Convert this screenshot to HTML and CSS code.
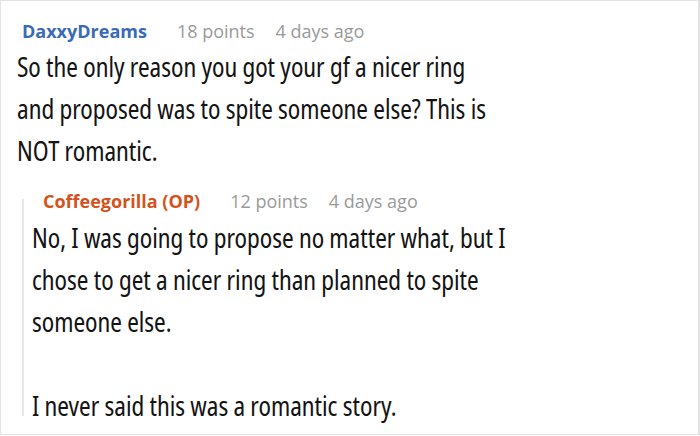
FILE: index.html
```html
<!DOCTYPE html>
<html lang="en">
<head>
<meta charset="utf-8">
<link rel="stylesheet" href="styles.css">
</head>
<body>
<div class="frame">
  <div class="comment">
    <div class="meta">
      <span class="author author-blue">DaxxyDreams</span>
      <span class="points">18 points</span>
      <span class="date">4 days ago</span>
    </div>
    <div class="body top-body">
      <p>So the only reason you got your gf a nicer ring and proposed was to spite someone else? This is NOT romantic.</p>
    </div>
    <div class="reply">
      <div class="reply-bar"></div>
      <div class="reply-content">
        <div class="meta">
          <span class="author author-orange">Coffeegorilla (OP)</span>
          <span class="points">12 points</span>
          <span class="date">4 days ago</span>
        </div>
        <div class="body reply-body">
          <p>No, I was going to propose no matter what, but I chose to get a nicer ring than planned to spite someone else.</p>
          <p class="gap">I never said this was a romantic story.</p>
        </div>
      </div>
    </div>
  </div>
</div>
</body>
</html>
```
FILE: styles.css
```css
html, body {
  margin: 0;
  padding: 0;
  background: #fff;
}
.frame {
  box-sizing: border-box;
  width: 700px;
  height: 435px;
  border: 1px solid #e2e2e2;
  border-right-width: 2px;
  overflow: hidden;
}
.comment {
  padding-top: 18px;
}
.meta {
  display: flex;
  align-items: baseline;
  font-family: "Open Sans", "Noto Sans", sans-serif;
  font-size: 18px;
  line-height: 24px;
  padding-left: 21px;
}
.author {
  font-weight: 700;
}
.author-blue { color: #3a6ab8; }
.author-orange { color: #d4521c; }
.points {
  color: #9a9a9a;
  margin-left: 30px;
}
.date {
  color: #9a9a9a;
  margin-left: 21px;
}
.body {
  margin-top: 3px;
  width: 565px;
  transform: scaleX(0.855);
  transform-origin: left top;
  font-family: "Noto Sans Display", "Noto Sans", sans-serif;
  font-stretch: condensed;
  font-size: 28px;
  line-height: 42px;
  color: #141414;
}
.body p {
  margin: 0;
}
.body p.gap {
  margin-top: 42px;
}
.top-body {
  margin-top: 2px;
  margin-left: 16px;
}
.reply {
  display: flex;
  margin-top: 18px;
  margin-left: 21px;
}
.reply-bar {
  flex: none;
  width: 2px;
  margin: 10px 0 10px;
  background: #e6e6e6;
}
.reply-content {
  flex: 1;
}
.reply .meta {
  padding-left: 19px;
}
.reply-body {
  margin-left: 8px;
}
```
